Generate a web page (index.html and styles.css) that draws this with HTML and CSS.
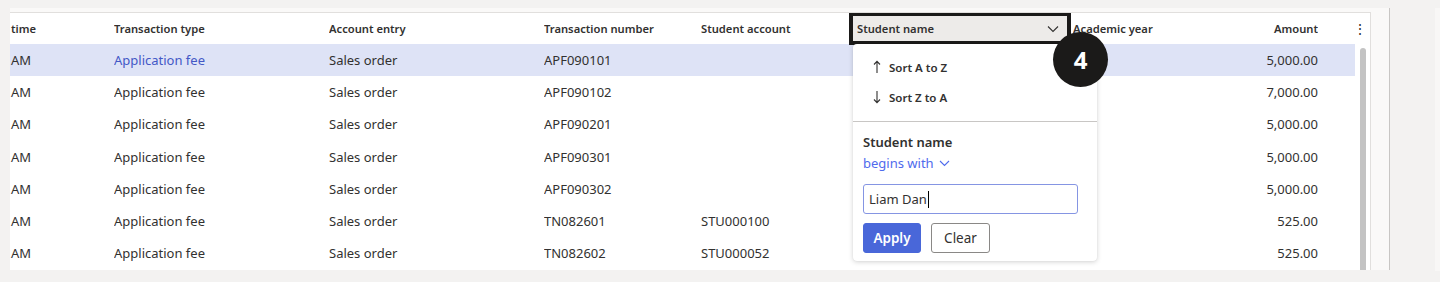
FILE: index.html
```html
<!DOCTYPE html>
<html lang="en">
<head>
  <meta charset="UTF-8" />
  <meta name="viewport" content="width=device-width, initial-scale=1" />
  <title>Student transactions</title>
  <link rel="stylesheet" href="styles.css">
</head>
<body>

  <div class="page">
    <div class="workspace">
      <div class="grid">

        <!-- Column headers -->
        <div class="head row-cols">
          <div class="cell first">time</div>
          <div class="cell">Transaction type</div>
          <div class="cell">Account entry</div>
          <div class="cell">Transaction number</div>
          <div class="cell">Student account</div>
          <div class="cell">Student name</div>
          <div class="cell">Academic year</div>
          <div class="cell num">Amount</div>
          <div class="cell"></div>
          <div class="cell more">&#8942;</div>
        </div>

        <div class="body">
          <div class="rows">
            <div class="row row-cols selected">
              <div class="cell first">AM</div>
              <div class="cell link">Application fee</div>
              <div class="cell">Sales order</div>
              <div class="cell">APF090101</div>
              <div class="cell"></div>
              <div class="cell"></div>
              <div class="cell"></div>
              <div class="cell num">5,000.00</div>
            </div>
            <div class="row row-cols">
              <div class="cell first">AM</div>
              <div class="cell">Application fee</div>
              <div class="cell">Sales order</div>
              <div class="cell">APF090102</div>
              <div class="cell"></div>
              <div class="cell"></div>
              <div class="cell"></div>
              <div class="cell num">7,000.00</div>
            </div>
            <div class="row row-cols">
              <div class="cell first">AM</div>
              <div class="cell">Application fee</div>
              <div class="cell">Sales order</div>
              <div class="cell">APF090201</div>
              <div class="cell"></div>
              <div class="cell"></div>
              <div class="cell"></div>
              <div class="cell num">5,000.00</div>
            </div>
            <div class="row row-cols">
              <div class="cell first">AM</div>
              <div class="cell">Application fee</div>
              <div class="cell">Sales order</div>
              <div class="cell">APF090301</div>
              <div class="cell"></div>
              <div class="cell"></div>
              <div class="cell"></div>
              <div class="cell num">5,000.00</div>
            </div>
            <div class="row row-cols">
              <div class="cell first">AM</div>
              <div class="cell">Application fee</div>
              <div class="cell">Sales order</div>
              <div class="cell">APF090302</div>
              <div class="cell"></div>
              <div class="cell"></div>
              <div class="cell"></div>
              <div class="cell num">5,000.00</div>
            </div>
            <div class="row row-cols">
              <div class="cell first">AM</div>
              <div class="cell">Application fee</div>
              <div class="cell">Sales order</div>
              <div class="cell">TN082601</div>
              <div class="cell">STU000100</div>
              <div class="cell">Liam Dany</div>
              <div class="cell"></div>
              <div class="cell num">525.00</div>
            </div>
            <div class="row row-cols">
              <div class="cell first">AM</div>
              <div class="cell">Application fee</div>
              <div class="cell">Sales order</div>
              <div class="cell">TN082602</div>
              <div class="cell">STU000052</div>
              <div class="cell">Henry Day</div>
              <div class="cell"></div>
              <div class="cell num">525.00</div>
            </div>
          </div>
          <div class="scroll"><div class="thumb"></div></div>
        </div>

        <!-- Highlighted column header -->
        <div class="callout">
          <span>Student name</span>
          <svg width="12" height="8" viewBox="0 0 12 8"><path d="M1 1.5 6 6.5 11 1.5" fill="none" stroke="#323130" stroke-width="1.1"/></svg>
        </div>

        <!-- Filter menu -->
        <div class="menu">
          <div class="sorts">
            <div class="sort">
              <svg class="arrow" width="8" height="14" viewBox="0 0 8 14"><path d="M4 13V1.5M1 4.5 4 1.3 7 4.5" fill="none" stroke="#323130" stroke-width="1.1"/></svg>
              Sort A to Z
            </div>
            <div class="sort">
              <svg class="arrow" width="8" height="14" viewBox="0 0 8 14"><path d="M4 1v11.5M1 9.5 4 12.7 7 9.5" fill="none" stroke="#323130" stroke-width="1.1"/></svg>
              Sort Z to A
            </div>
          </div>
          <div class="filter">
            <div class="label">Student name</div>
            <div class="op">begins with
              <svg width="11" height="7" viewBox="0 0 11 7"><path d="M1 1 5.5 5.5 10 1" fill="none" stroke="#4f6bed" stroke-width="1.1"/></svg>
            </div>
            <div class="field">Liam Dan<span class="caret"></span></div>
            <div class="actions">
              <button class="apply">Apply</button>
              <button class="clear">Clear</button>
            </div>
          </div>
        </div>

        <div class="badge">4</div>
      </div>
    </div>
    <div class="side"></div>
  </div>

</body>
</html>
```

FILE: styles.css
```css
* {
  box-sizing: border-box;
  font-family: 'Noto Sans', 'Liberation Sans', sans-serif;
}
body {
  margin: 0;
  background: #f3f2f1;
  color: #323130;
  height: 282px;
  overflow: hidden;
}
.page {
  display: flex;
  padding-top: 8px;
  height: 282px;
}
.workspace {
  margin-left: 10px;
  width: 1380px;
  height: 262px;
  padding-top: 4px;
  background: #faf9f8;
  border-right: 1px solid #c8c6c4;
}
.side {
  flex: 1;
  height: 263px;
  margin-left: 45px;
  background: #f8f7f6;
}
.grid {
  position: relative;
  width: 1361px;
  height: 258px;
  background: #fff;
  border-top: 1px solid #e1dfdd;
  border-right: 1px solid #e1dfdd;
  overflow: hidden;
}
.row-cols {
  display: grid;
  grid-template-columns: 104px 215px 215px 157px 156px 216px 127px 118px 35px 15px;
  align-items: center;
}
.head {
  height: 31px;
  font-size: 11.2px;
  font-weight: 600;
}
.cell {
  white-space: nowrap;
  overflow: hidden;
}
.first {
  padding-left: 1px;
}
.num {
  text-align: right;
}
.more {
  font-size: 14px;
  font-weight: 400;
  text-align: left;
}
.body {
  display: flex;
}
.rows {
  width: 1345px;
}
.row {
  height: 32.2px;
  font-size: 13px;
}
.selected {
  background: #dee3f6;
}
.link {
  color: #4358c6;
}
.scroll {
  width: 15px;
  padding: 4px 0 0 5px;
}
.thumb {
  width: 6px;
  height: 240px;
  background: #c3c3c3;
  border-radius: 3px 3px 0 0;
}

/* header focus box */
.callout {
  position: absolute;
  left: 839px;
  top: -1px;
  width: 222px;
  height: 33px;
  border: 4px solid #1b1a19;
  background: #edebe9;
  display: flex;
  align-items: center;
  justify-content: space-between;
  padding: 0 8px 0 4px;
  font-size: 11.2px;
  font-weight: 600;
}
.badge {
  position: absolute;
  left: 1043px;
  top: 19px;
  width: 55px;
  height: 55px;
  border-radius: 50%;
  background: #1b1a19;
  color: #fff;
  font-size: 24px;
  font-weight: 700;
  display: flex;
  align-items: center;
  justify-content: center;
}

/* filter menu */
.menu {
  position: absolute;
  left: 843px;
  top: 31px;
  width: 244px;
  height: 217px;
  background: #fff;
  border-radius: 4px;
  box-shadow: 0 1px 5px rgba(0, 0, 0, 0.18), 0 0 1px rgba(0, 0, 0, 0.1);
}
.sorts {
  padding: 8px 0 9px;
  border-bottom: 1px solid #c8c6c4;
}
.sort {
  height: 30px;
  display: flex;
  align-items: center;
  padding-left: 20px;
  font-size: 11.5px;
  font-weight: 600;
}
.arrow {
  margin-right: 8px;
}
.filter {
  padding: 10px 10px 10px;
}
.label {
  height: 21px;
  line-height: 21px;
  font-size: 13px;
  font-weight: 600;
}
.op {
  height: 20px;
  line-height: 20px;
  font-size: 13px;
  color: #4f6bed;
  display: flex;
  align-items: center;
  gap: 5px;
}
.field {
  margin-top: 11px;
  width: 215px;
  height: 30px;
  border: 1px solid #8595e3;
  border-radius: 3px;
  padding-left: 5px;
  font-size: 13px;
  display: flex;
  align-items: center;
}
.caret {
  width: 1px;
  height: 17px;
  background: #000;
  margin-left: 1px;
}
.actions {
  display: flex;
  gap: 10px;
  margin-top: 9px;
}
button {
  height: 30px;
  border-radius: 3px;
  font-size: 13.5px;
  font-weight: 600;
  padding: 0;
}
.apply {
  width: 58px;
  background: #4967d9;
  border: 1px solid #4967d9;
  color: #fff;
}
.clear {
  width: 59px;
  background: #fff;
  border: 1px solid #8a8886;
  color: #323130;
  font-weight: 400;
}
```
